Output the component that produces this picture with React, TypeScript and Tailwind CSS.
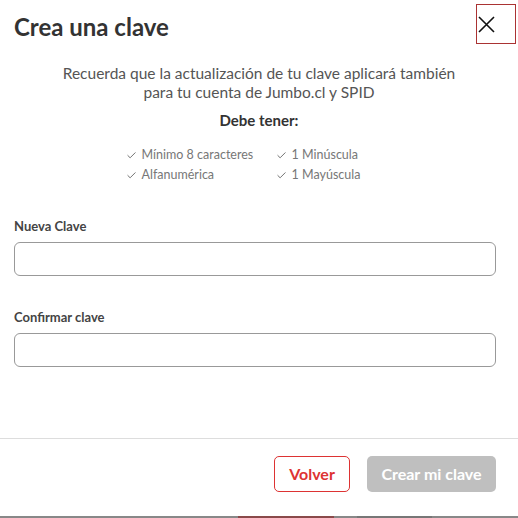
import { Check } from "lucide-react";

const reglas = [
  ["Mínimo 8 caracteres", "1 Minúscula"],
  ["Alfanumérica", "1 Mayúscula"],
];

function Campo({ label }: { label: string }) {
  return (
    <div className="flex flex-col">
      <label className="text-[13px] font-bold leading-4 text-[#444]">{label}</label>
      <input
        type="password"
        className="mt-[8px] h-[34px] w-full rounded-md border border-[#999] px-3 outline-none"
      />
    </div>
  );
}

export default function App() {
  return (
    <div className="flex h-[518px] w-[518px] flex-col bg-white font-['Lato','Liberation_Sans',sans-serif]">
      <div className="flex items-start justify-between pl-[14px] pr-[2px] pt-1">
        <h1 className="mt-[9px] text-[24px] font-bold leading-7 text-[#333]">Crea una clave</h1>
        <button className="flex h-[40px] w-[40px] items-center border border-[#a33] pl-[1px]">
          <svg width="17" height="17" viewBox="0 0 17 17" fill="none" stroke="#111" strokeWidth="1.6">
            <path d="M1 1L16 16M16 1L1 16" />
          </svg>
        </button>
      </div>

      <div className="mt-[20px] flex flex-col items-center text-center">
        <p className="text-[15.5px] leading-[19px] text-[#555]">
          Recuerda que la actualización de tu clave aplicará también
          <br />
          para tu cuenta de Jumbo.cl y SPID
        </p>
        <p className="mt-[8px] text-[15px] font-bold leading-5 text-[#333]">Debe tener:</p>
        <div className="mr-[32px] mt-[17px] grid grid-cols-[150px_auto] gap-y-[4px] text-[12.5px] leading-4 text-[#777]">
          {reglas.map((fila) =>
            fila.map((r) => (
              <div key={r} className="flex items-center gap-[5px]">
                <Check size={11} strokeWidth={2} className="text-[#666]" />
                <span>{r}</span>
              </div>
            ))
          )}
        </div>
      </div>

      <div className="mt-[35px] flex flex-col gap-[33px] px-[14px] pr-[22px]">
        <Campo label="Nueva Clave" />
        <Campo label="Confirmar clave" />
      </div>

      <div className="mt-auto border-t border-[#ddd]">
        <div className="flex justify-end gap-[17px] pb-[24px] pr-[22px] pt-[17px]">
          <button className="h-[36px] w-[76px] rounded-[5px] border border-[#d33] text-[16px] font-bold text-[#d33]">
            Volver
          </button>
          <button className="h-[36px] w-[129px] rounded-[5px] bg-[#bfbfbf] text-[16px] font-bold text-white">
            Crear mi clave
          </button>
        </div>
        <div className="flex h-[2px] bg-[#888]">
          <div className="ml-[238px] w-[96px] bg-[#8a4a4a]" />
          <div className="ml-[23px] w-[75px] bg-[#777]" />
        </div>
      </div>
    </div>
  );
}
